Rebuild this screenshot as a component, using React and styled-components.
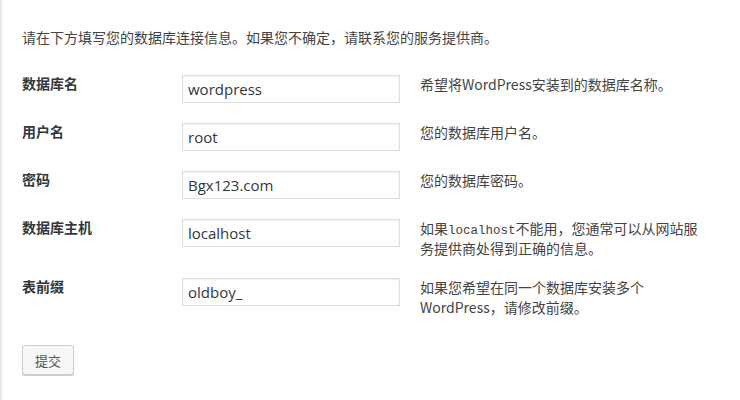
import React from "react";
import styled, { createGlobalStyle } from "styled-components";

const GlobalStyle = createGlobalStyle`
  html, body {
    margin: 0;
    padding: 0;
    background: #fff;
  }
  body {
    font-family: "Open Sans", "Noto Sans CJK SC", sans-serif;
    color: #444;
  }
`;

const Page = styled.div`
  width: 740px;
  height: 400px;
  box-sizing: border-box;
  border-left: 2px solid #e6e6e6;
  padding: 22px 0 0 20px;
  overflow: hidden;
`;

const Intro = styled.p`
  margin: 0 0 13px;
  font-family: "Noto Sans CJK SC", sans-serif;
  font-size: 14px;
  line-height: 30px;
  color: #444;
`;

const Form = styled.form`
  display: grid;
  grid-template-columns: 160px 238px 1fr;
`;

const Label = styled.label`
  padding: 8px 0 12px;
  font-family: "Noto Sans CJK SC", sans-serif;
  font-size: 14px;
  font-weight: 700;
  line-height: 20px;
  color: #32373c;
`;

const Cell = styled.div`
  padding: 10px 0;
`;

const Input = styled.input`
  display: block;
  box-sizing: border-box;
  width: 218px;
  height: 28px;
  padding: 2px 5px 3px;
  border: 1px solid #ddd;
  box-shadow: inset 0 1px 2px rgba(0, 0, 0, 0.07);
  background: #fff;
  font-family: "Open Sans", "Noto Sans", sans-serif;
  font-size: 15px;
  color: #32373c;
  outline: none;
`;

const Desc = styled.div`
  padding: 10px 0;
  width: 286px;
  font-family: "Noto Sans CJK SC", sans-serif;
  font-size: 14px;
  line-height: 19.5px;
  color: #444;
`;

const Code = styled.code`
  font-family: "Liberation Mono", "DejaVu Sans Mono", monospace;
  font-size: 12.5px;
  line-height: 1;
`;

const Actions = styled.div`
  padding-top: 18px;
`;

const Button = styled.button`
  box-sizing: border-box;
  height: 30px;
  width: 52px;
  padding: 0;
  border: 1px solid #ccc;
  border-radius: 3px;
  background: #f7f7f7;
  box-shadow: 0 1px 0 #ccc;
  font-family: "Noto Sans CJK SC", sans-serif;
  font-size: 13px;
  color: #555;
`;

const fields = [
  { label: "数据库名", value: "wordpress", desc: "希望将WordPress安装到的数据库名称。" },
  { label: "用户名", value: "root", desc: "您的数据库用户名。" },
  { label: "密码", value: "Bgx123.com", desc: "您的数据库密码。" },
  {
    label: "数据库主机",
    value: "localhost",
    desc: (
      <>
        如果<Code>localhost</Code>不能用，您通常可以从网站服务提供商处得到正确的信息。
      </>
    ),
  },
  { label: "表前缀", value: "oldboy_", desc: "如果您希望在同一个数据库安装多个WordPress，请修改前缀。" },
];

export default function App() {
  return (
    <Page>
      <GlobalStyle />
      <Intro>请在下方填写您的数据库连接信息。如果您不确定，请联系您的服务提供商。</Intro>
      <Form onSubmit={(e) => e.preventDefault()}>
        {fields.map((f) => (
          <React.Fragment key={f.label}>
            <Label>{f.label}</Label>
            <Cell>
              <Input defaultValue={f.value} />
            </Cell>
            <Desc>{f.desc}</Desc>
          </React.Fragment>
        ))}
      </Form>
      <Actions>
        <Button type="button">提交</Button>
      </Actions>
    </Page>
  );
}
